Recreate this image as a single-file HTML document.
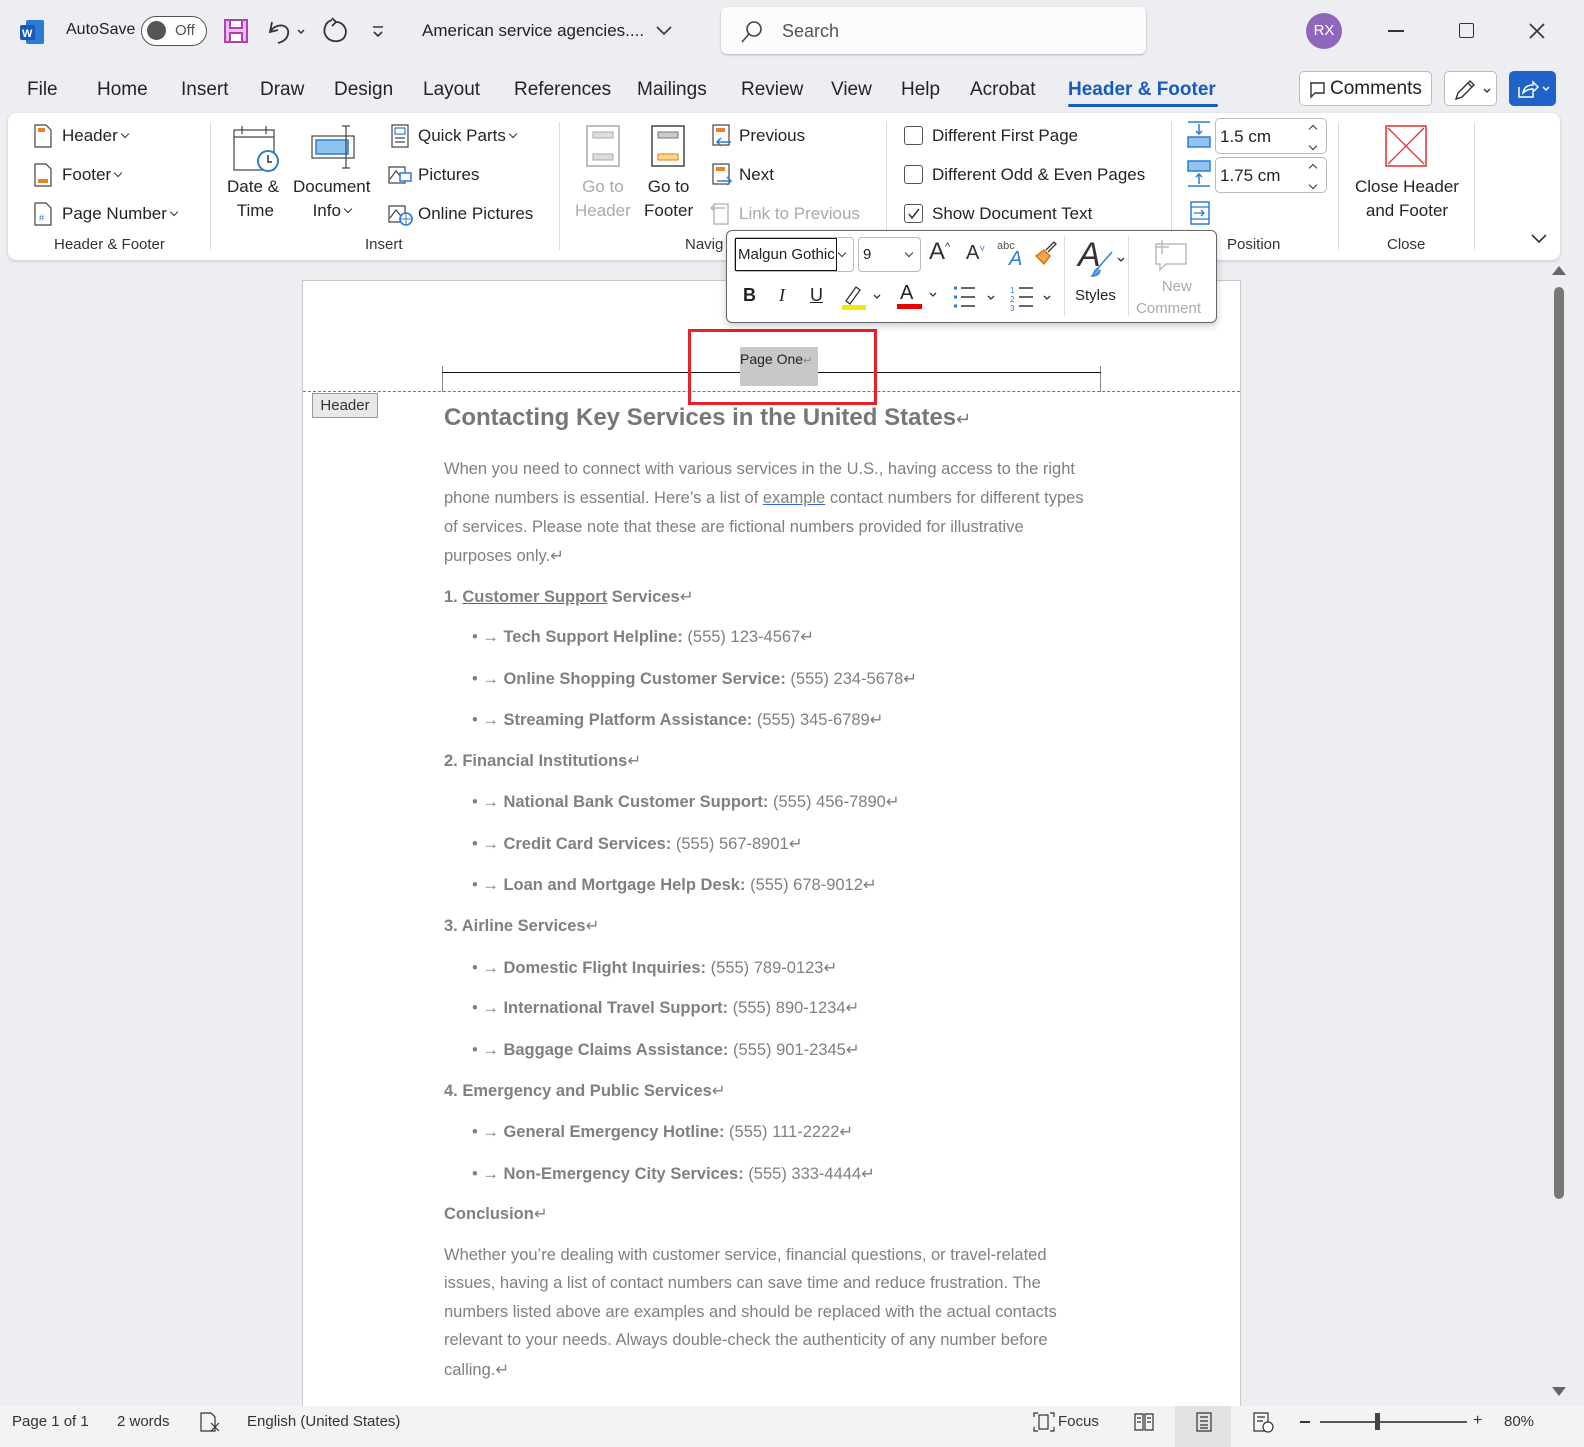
<!DOCTYPE html>
<html><head><meta charset="utf-8"><style>
*{margin:0;padding:0;box-sizing:border-box}
body{width:1584px;height:1447px;position:relative;overflow:hidden;background:#eceef2;font-family:"Liberation Sans",sans-serif;color:#222}
.a{position:absolute;white-space:nowrap}
.t{font-size:19px;color:#242424}
.r{font-size:17px;color:#242424}
.g{color:#aaa}
.d{position:absolute;white-space:nowrap;font-size:16.5px;color:#808080;left:444px}
.b{font-weight:bold}
.bl{left:472px}
.u{text-decoration:underline;text-decoration-color:#3366dd}
.lbl{font-size:15px;color:#333}
.sep{position:absolute;width:1px;background:#ddd}
.cv{display:inline-block;width:6px;height:6px;border-right:1.4px solid #333;border-bottom:1.4px solid #333;transform:rotate(45deg);vertical-align:middle;margin:-6px 0 0 4px}
.cu{display:inline-block;width:6px;height:6px;border-left:1.4px solid #333;border-top:1.4px solid #333;transform:rotate(45deg)}
</style></head><body>
<svg class="a" style="left:18px;top:18px" width="28" height="28"><rect x="8" y="2" width="18" height="24" rx="2" fill="#2b7cd3"/><rect x="2" y="7" width="15" height="15" rx="2" fill="#185abd"/><text x="4" y="19" font-size="11" font-weight="bold" fill="#fff" font-family="Liberation Sans">W</text></svg>
<div class="a" style="left:66px;top:21px;font-size:16px;color:#222">AutoSave</div>
<div class="a" style="left:141px;top:16px;width:66px;height:30px;border:1.5px solid #555;border-radius:15px;background:#fff"><div style="position:absolute;left:5px;top:4px;width:19px;height:19px;border-radius:50%;background:#555"></div><span style="position:absolute;left:33px;top:5px;font-size:15px;color:#555">Off</span></div>
<svg class="a" style="left:223px;top:18px" width="26" height="26"><rect x="2" y="2" width="22" height="22" fill="#e8c0e8" stroke="#b040b0" stroke-width="2"/><rect x="7" y="2" width="12" height="8" fill="#fff" stroke="#b040b0" stroke-width="2"/><rect x="7" y="15" width="12" height="9" fill="#fff" stroke="#b040b0" stroke-width="2"/></svg>
<svg class="a" style="left:266px;top:18px" width="50" height="28"><path d="M6 4 L4 14 L12 12 M4 14 C10 4 24 6 22 16 C21 22 16 24 12 25" fill="none" stroke="#333" stroke-width="1.8"/><path d="M32 12 l3 3 3-3" fill="none" stroke="#333" stroke-width="1.5"/></svg>
<svg class="a" style="left:320px;top:16px" width="30" height="30"><path d="M12 4 C4 6 3 16 6 20 C10 27 22 27 25 20 C28 13 23 6 16 6 M12 2 l4 4 -4 4" fill="none" stroke="#333" stroke-width="1.8"/></svg>
<svg class="a" style="left:370px;top:24px" width="16" height="16"><path d="M3 3h10 M4 8l4 4 4-4" fill="none" stroke="#333" stroke-width="1.6"/></svg>
<div class="a" style="left:422px;top:21px;font-size:17px;color:#222">American service agencies....</div>
<svg class="a" style="left:655px;top:24px" width="18" height="14"><path d="M2 3l7 7 7-7" fill="none" stroke="#333" stroke-width="1.6"/></svg>
<div class="a" style="left:721px;top:7px;width:425px;height:47px;background:#fcfcfc;border-radius:6px;box-shadow:0 1px 2px rgba(0,0,0,.25)"></div>
<svg class="a" style="left:740px;top:20px" width="24" height="24"><circle cx="14" cy="9" r="7" fill="none" stroke="#444" stroke-width="1.6"/><path d="M9 14L2 22" stroke="#444" stroke-width="1.6"/></svg>
<div class="a" style="left:782px;top:21px;font-size:18px;color:#555">Search</div>
<div class="a" style="left:1306px;top:13px;width:36px;height:36px;border-radius:50%;background:#8e66bb;color:#fff;font-size:15px;text-align:center;line-height:36px">RX</div>
<div class="a" style="left:1388px;top:30px;width:16px;height:1.5px;background:#333"></div>
<div class="a" style="left:1459px;top:23px;width:15px;height:15px;border:1.5px solid #333;border-radius:2px"></div>
<svg class="a" style="left:1528px;top:22px" width="18" height="18"><path d="M2 2l14 14M16 2L2 16" stroke="#333" stroke-width="1.6"/></svg>
<div class="a t" style="left:27px;top:79px">File</div>
<div class="a t" style="left:97px;top:79px">Home</div>
<div class="a t" style="left:181px;top:79px">Insert</div>
<div class="a t" style="left:260px;top:79px">Draw</div>
<div class="a t" style="left:334px;top:79px">Design</div>
<div class="a t" style="left:423px;top:79px">Layout</div>
<div class="a t" style="left:514px;top:79px">References</div>
<div class="a t" style="left:637px;top:79px">Mailings</div>
<div class="a t" style="left:741px;top:79px">Review</div>
<div class="a t" style="left:831px;top:79px">View</div>
<div class="a t" style="left:901px;top:79px">Help</div>
<div class="a t" style="left:970px;top:79px">Acrobat</div>
<div class="a t" style="left:1068px;top:79px;color:#185abd;font-weight:bold">Header &amp; Footer</div>
<div class="a" style="left:1068px;top:104px;width:150px;height:3px;background:#185abd;border-radius:2px"></div>
<div class="a" style="left:1299px;top:71px;width:133px;height:35px;border:1px solid #bbb;border-radius:5px;background:#fff"><svg style="position:absolute;left:8px;top:9px" width="18" height="18"><path d="M2 2h14v10H7l-4 4V2z" fill="none" stroke="#333" stroke-width="1.4"/></svg><span style="position:absolute;left:30px;top:6px;font-size:19px;color:#222">Comments</span></div>
<div class="a" style="left:1444px;top:71px;width:53px;height:35px;border:1px solid #bbb;border-radius:5px;background:#fff"><svg style="position:absolute;left:7px;top:6px" width="42" height="24"><path d="M4 21l2-6 12-12 4 4-12 12z M16 5l4 4" fill="none" stroke="#333" stroke-width="1.4"/><path d="M32 11l3 3 3-3" fill="none" stroke="#333" stroke-width="1.4"/></svg></div>
<div class="a" style="left:1509px;top:71px;width:47px;height:35px;border-radius:5px;background:#1f63c8"><svg style="position:absolute;left:8px;top:8px" width="34" height="20"><path d="M2 8v10h14v-4 M6 14c1-6 5-8 10-8V3l5 5-5 5V10c-4 0-7 1-10 4z" fill="none" stroke="#fff" stroke-width="1.5"/><path d="M26 8l3 3 3-3" fill="none" stroke="#fff" stroke-width="1.5"/></svg></div>
<div class="a" style="left:8px;top:113px;width:1552px;height:147px;background:#fff;border-radius:8px;box-shadow:0 1px 3px rgba(0,0,0,.18)"></div>
<svg class="a" style="left:33px;top:124px" width="20" height="24"><path d="M2 1h11l5 5v17H2z" fill="#fff" stroke="#444" stroke-width="1.2"/><rect x="5" y="4" width="7" height="4" fill="#e8832a"/></svg>
<div class="a r" style="left:62px;top:126px">Header<span class="cv"></span></div>
<svg class="a" style="left:33px;top:163px" width="20" height="24"><path d="M2 1h11l5 5v17H2z" fill="#fff" stroke="#444" stroke-width="1.2"/><rect x="5" y="16" width="10" height="4" fill="#e8832a"/></svg>
<div class="a r" style="left:62px;top:165px">Footer<span class="cv"></span></div>
<svg class="a" style="left:33px;top:202px" width="20" height="24"><path d="M2 1h11l5 5v17H2z" fill="#fff" stroke="#444" stroke-width="1.2"/><text x="6" y="19" font-size="9" fill="#2b7cd3" font-family="Liberation Sans">#</text></svg>
<div class="a r" style="left:62px;top:204px">Page Number<span class="cv"></span></div>
<div class="a lbl" style="left:54px;top:236px">Header &amp; Footer</div>
<div class="sep" style="left:210px;top:122px;height:128px"></div>
<svg class="a" style="left:232px;top:124px" width="50" height="50"><rect x="2" y="6" width="40" height="40" fill="#fff" stroke="#444" stroke-width="1.2"/><path d="M2 13h40 M10 2v8 M34 2v8" stroke="#444" stroke-width="1.2"/><circle cx="36" cy="37" r="10" fill="#fff" stroke="#2b7cd3" stroke-width="2"/><path d="M36 31v7h4" fill="none" stroke="#333" stroke-width="1.5"/></svg>
<div class="a r" style="left:227px;top:175px;text-align:center;line-height:24px">Date &amp;<br>&nbsp;Time</div>
<svg class="a" style="left:310px;top:124px" width="50" height="46"><rect x="2" y="12" width="42" height="22" fill="#fff" stroke="#444" stroke-width="1.2"/><rect x="6" y="16" width="32" height="14" fill="#8fc3f0" stroke="#2b7cd3" stroke-width="1.5"/><path d="M36 2v42 M32 2h8 M32 44h8" stroke="#444" stroke-width="1.2"/></svg>
<div class="a r" style="left:293px;top:175px;text-align:center;line-height:24px">Document<br>Info<span class="cv"></span></div>
<svg class="a" style="left:390px;top:124px" width="20" height="24"><rect x="2" y="1" width="16" height="22" fill="#fff" stroke="#444" stroke-width="1.2"/><rect x="5" y="4" width="10" height="6" fill="#fff" stroke="#2b7cd3" stroke-width="1.2"/><path d="M5 14h10M5 18h10" stroke="#666" stroke-width="1.5"/></svg>
<div class="a r" style="left:418px;top:126px">Quick Parts<span class="cv"></span></div>
<svg class="a" style="left:387px;top:163px" width="26" height="24"><path d="M2 4h16v16H2z M3 16l6-8 5 6" fill="none" stroke="#444" stroke-width="1.2"/><rect x="13" y="10" width="11" height="8" fill="#fff" stroke="#2b7cd3" stroke-width="1.5"/></svg>
<div class="a r" style="left:418px;top:165px">Pictures</div>
<svg class="a" style="left:387px;top:202px" width="26" height="24"><path d="M2 4h16v16H2z M3 16l6-8 5 6" fill="none" stroke="#444" stroke-width="1.2"/><circle cx="19" cy="17" r="6" fill="#fff" stroke="#2b7cd3" stroke-width="1.6"/><path d="M13 17h12M19 11v12" stroke="#2b7cd3" stroke-width="1"/></svg>
<div class="a r" style="left:418px;top:204px">Online Pictures</div>
<div class="a lbl" style="left:365px;top:236px">Insert</div>
<div class="sep" style="left:559px;top:122px;height:128px"></div>
<svg class="a" style="left:585px;top:124px" width="36" height="44"><rect x="2" y="2" width="32" height="40" fill="#fff" stroke="#aaa" stroke-width="1.5"/><rect x="8" y="8" width="20" height="6" fill="#ddd" stroke="#aaa"/><rect x="8" y="30" width="20" height="6" fill="#ddd" stroke="#aaa"/></svg>
<div class="a r g" style="left:575px;top:175px;text-align:center;line-height:24px">Go to<br>Header</div>
<svg class="a" style="left:650px;top:124px" width="36" height="44"><rect x="2" y="2" width="32" height="40" fill="#fff" stroke="#444" stroke-width="1.5"/><rect x="8" y="8" width="20" height="6" fill="#ccc" stroke="#777"/><rect x="8" y="30" width="20" height="6" fill="#fcd68a" stroke="#e07a10"/></svg>
<div class="a r" style="left:644px;top:175px;text-align:center;line-height:24px">Go to<br>Footer</div>
<svg class="a" style="left:711px;top:124px" width="22" height="24"><rect x="2" y="1" width="16" height="20" fill="#fff" stroke="#444" stroke-width="1.2"/><rect x="5" y="4" width="9" height="4" fill="#e8832a"/><path d="M20 18H7 M10 14l-4 4 4 4" fill="none" stroke="#2b7cd3" stroke-width="1.5"/></svg>
<div class="a r" style="left:739px;top:126px">Previous</div>
<svg class="a" style="left:711px;top:163px" width="22" height="24"><rect x="2" y="1" width="16" height="20" fill="#fff" stroke="#444" stroke-width="1.2"/><rect x="5" y="4" width="9" height="4" fill="#e8832a"/><path d="M6 18h13 M16 14l4 4-4 4" fill="none" stroke="#2b7cd3" stroke-width="1.5"/></svg>
<div class="a r" style="left:739px;top:165px">Next</div>
<svg class="a" style="left:709px;top:200px" width="24" height="26"><rect x="5" y="4" width="14" height="20" fill="#fff" stroke="#bbb" stroke-width="1.5"/><path d="M2 8h14 M5 5l-3 3 3 3" fill="none" stroke="#bbb" stroke-width="1.5"/></svg>
<div class="a r g" style="left:739px;top:204px">Link to Previous</div>
<div class="a lbl" style="left:685px;top:236px">Navig</div>
<div class="sep" style="left:886px;top:122px;height:128px"></div>
<div class="a" style="left:904px;top:126px;width:19px;height:19px;border:1.5px solid #555;border-radius:3px"></div>
<div class="a r" style="left:932px;top:126px">Different First Page</div>
<div class="a" style="left:904px;top:165px;width:19px;height:19px;border:1.5px solid #555;border-radius:3px"></div>
<div class="a r" style="left:932px;top:165px">Different Odd &amp; Even Pages</div>
<div class="a" style="left:904px;top:204px;width:19px;height:19px;border:1.5px solid #555;border-radius:3px"><svg style="position:absolute;left:2px;top:2px" width="14" height="14"><path d="M2 7l3 4 7-9" fill="none" stroke="#333" stroke-width="1.5"/></svg></div>
<div class="a r" style="left:932px;top:204px">Show Document Text</div>
<div class="sep" style="left:1171px;top:122px;height:128px"></div>
<svg class="a" style="left:1186px;top:120px" width="28" height="30"><path d="M2 2h22 M13 4v10 M10 11l3 3 3-3" fill="none" stroke="#2b7cd3" stroke-width="1.5"/><rect x="2" y="17" width="22" height="10" fill="#8fc3f0" stroke="#2b7cd3" stroke-width="1.5"/></svg>
<div class="a" style="left:1215px;top:118px;width:112px;height:36px;border:1px solid #bbb;border-radius:5px"><span style="position:absolute;left:4px;top:8px;font-size:17px">1.5 cm</span><span class="cu" style="position:absolute;right:10px;top:7px"></span><span class="cv" style="position:absolute;right:10px;top:24px;margin:0"></span></div>
<svg class="a" style="left:1186px;top:158px" width="28" height="30"><rect x="2" y="3" width="22" height="10" fill="#8fc3f0" stroke="#2b7cd3" stroke-width="1.5"/><path d="M2 28h22 M13 26V16 M10 19l3-3 3 3" fill="none" stroke="#2b7cd3" stroke-width="1.5"/></svg>
<div class="a" style="left:1215px;top:157px;width:112px;height:36px;border:1px solid #bbb;border-radius:5px"><span style="position:absolute;left:4px;top:8px;font-size:17px">1.75 cm</span><span class="cu" style="position:absolute;right:10px;top:7px"></span><span class="cv" style="position:absolute;right:10px;top:24px;margin:0"></span></div>
<svg class="a" style="left:1189px;top:200px" width="24" height="26"><rect x="2" y="2" width="18" height="22" fill="none" stroke="#2b7cd3" stroke-width="1.5"/><path d="M2 7h18M2 19h18 M5 13h10 M12 10l3 3-3 3" fill="none" stroke="#2b7cd3" stroke-width="1.3"/></svg>
<div class="a lbl" style="left:1227px;top:236px">Position</div>
<div class="sep" style="left:1338px;top:122px;height:128px"></div>
<svg class="a" style="left:1384px;top:124px" width="46" height="46"><rect x="2" y="2" width="40" height="40" fill="#fff" stroke="#e03030" stroke-width="1.5"/><path d="M4 4l36 36M40 4L4 40" stroke="#e03030" stroke-width="1.3"/></svg>
<div class="a r" style="left:1355px;top:175px;text-align:center;line-height:24px">Close Header<br>and Footer</div>
<div class="a lbl" style="left:1387px;top:236px">Close</div>
<div class="sep" style="left:1474px;top:122px;height:128px"></div>
<svg class="a" style="left:1530px;top:232px" width="18" height="14"><path d="M2 3l7 7 7-7" fill="none" stroke="#333" stroke-width="1.6"/></svg>
<div class="a" style="left:302px;top:280px;width:939px;height:1130px;background:#fff;border:1px solid #c8c8c8"></div>
<div class="a" style="left:442px;top:366px;width:1px;height:26px;background:#888"></div>
<div class="a" style="left:1100px;top:366px;width:1px;height:26px;background:#888"></div>
<div class="a" style="left:442px;top:372px;width:659px;height:1px;background:#111"></div>
<div class="a" style="left:303px;top:391px;width:937px;border-top:1px dashed #777"></div>
<div class="a" style="left:740px;top:347px;width:78px;height:39px;background:#c8c8c8"></div>
<div class="a" style="left:740px;top:351px;font-size:14px;color:#222">Page One<span style="color:#888;font-size:11px">↵</span></div>
<div class="a" style="left:688px;top:329px;width:189px;height:76px;border:3px solid #e8202a"></div>
<div class="a" style="left:312px;top:393px;width:66px;height:25px;background:#e8e8e8;border:1px solid #999;font-size:15px;color:#333;text-align:center;line-height:23px">Header</div>
<div class="d b" style="top:404px;font-size:24px;color:#777">Contacting Key Services in the United States<span style="font-weight:normal;font-size:18px">↵</span></div>
<div class="d" style="top:460px">When you need to connect with various services in the U.S., having access to the right</div>
<div class="d" style="top:489px">phone numbers is essential. Here’s a list of <span class="u">example</span> contact numbers for different types</div>
<div class="d" style="top:518px">of services. Please note that these are fictional numbers provided for illustrative</div>
<div class="d" style="top:546px">purposes only.↵</div>
<div class="d b" style="top:587px">1. <span class="u">Customer Support</span> Services<span style="font-weight:normal">↵</span></div>
<div class="d bl" style="top:627px">• → <b>Tech Support Helpline:</b> (555) 123-4567↵</div>
<div class="d bl" style="top:669px">• → <b>Online Shopping Customer Service:</b> (555) 234-5678↵</div>
<div class="d bl" style="top:710px">• → <b>Streaming Platform Assistance:</b> (555) 345-6789↵</div>
<div class="d b" style="top:751px">2. Financial Institutions<span style="font-weight:normal">↵</span></div>
<div class="d bl" style="top:792px">• → <b>National Bank Customer Support:</b> (555) 456-7890↵</div>
<div class="d bl" style="top:834px">• → <b>Credit Card Services:</b> (555) 567-8901↵</div>
<div class="d bl" style="top:875px">• → <b>Loan and Mortgage Help Desk:</b> (555) 678-9012↵</div>
<div class="d b" style="top:916px">3. Airline Services<span style="font-weight:normal">↵</span></div>
<div class="d bl" style="top:958px">• → <b>Domestic Flight Inquiries:</b> (555) 789-0123↵</div>
<div class="d bl" style="top:998px">• → <b>International Travel Support:</b> (555) 890-1234↵</div>
<div class="d bl" style="top:1040px">• → <b>Baggage Claims Assistance:</b> (555) 901-2345↵</div>
<div class="d b" style="top:1081px">4. Emergency and Public Services<span style="font-weight:normal">↵</span></div>
<div class="d bl" style="top:1122px">• → <b>General Emergency Hotline:</b> (555) 111-2222↵</div>
<div class="d bl" style="top:1164px">• → <b>Non-Emergency City Services:</b> (555) 333-4444↵</div>
<div class="d b" style="top:1204px">Conclusion<span style="font-weight:normal">↵</span></div>
<div class="d" style="top:1246px">Whether you’re dealing with customer service, financial questions, or travel-related</div>
<div class="d" style="top:1274px">issues, having a list of contact numbers can save time and reduce frustration. The</div>
<div class="d" style="top:1303px">numbers listed above are examples and should be replaced with the actual contacts</div>
<div class="d" style="top:1331px">relevant to your needs. Always double-check the authenticity of any number before</div>
<div class="d" style="top:1360px">calling.↵</div>
<div class="a" style="left:726px;top:230px;width:491px;height:93px;background:#fff;border:1.5px solid #666;border-radius:6px;box-shadow:0 3px 8px rgba(0,0,0,.2)"></div>
<div class="a" style="left:734px;top:237px;width:120px;height:35px;border:1px solid #bbb;border-radius:4px"></div>
<div class="a" style="left:735px;top:238px;width:102px;height:33px;border:1.5px solid #111;font-size:15px;line-height:31px;padding-left:2px;overflow:hidden">Malgun Gothic</div>
<span class="a cv" style="left:839px;top:250px;margin:0"></span>
<div class="a" style="left:858px;top:237px;width:63px;height:35px;border:1px solid #bbb;border-radius:4px;font-size:15px;line-height:33px;padding-left:4px">9<span class="cv" style="position:absolute;right:8px;top:12px;margin:0"></span></div>
<div class="a" style="left:929px;top:238px;font-size:24px;color:#333">A<sup style="font-size:11px">^</sup></div>
<div class="a" style="left:966px;top:242px;font-size:20px;color:#333">A<sup style="font-size:10px;color:#2b7cd3">˅</sup></div>
<div class="a" style="left:997px;top:240px;font-size:11px;color:#555">abc</div>
<div class="a" style="left:1009px;top:248px;font-size:20px;color:#2b7cd3;font-style:italic">A</div>
<svg class="a" style="left:1032px;top:240px" width="26" height="28"><path d="M4 16l8-6 6 6-6 8z" fill="#f6a44a" stroke="#d06a10" stroke-width="1.3"/><path d="M14 10l8-8 2 2-8 8" fill="none" stroke="#333" stroke-width="1.3"/></svg>
<div class="a" style="left:1064px;top:236px;width:1px;height:80px;background:#ddd"></div>
<div class="a" style="left:1078px;top:236px;font-size:34px;color:#333;font-style:italic">A</div>
<svg class="a" style="left:1090px;top:248px" width="38" height="30"><path d="M22 4L8 20 M8 20c-4 2-4 6-6 8 4 0 8-2 8-6" fill="#6aa8e8" stroke="#2b7cd3" stroke-width="1.4"/><path d="M28 10l3 3 3-3" fill="none" stroke="#333" stroke-width="1.3"/></svg>
<div class="a" style="left:1075px;top:287px;font-size:15px">Styles</div>
<div class="a" style="left:1128px;top:236px;width:1px;height:80px;background:#ddd"></div>
<svg class="a" style="left:1150px;top:238px" width="40" height="36"><path d="M6 6h30v20H16l-6 6v-6H6z" fill="#fff" stroke="#bbb" stroke-width="1.5"/><path d="M12 2v14M5 9h14" stroke="#bbb" stroke-width="1.5"/></svg>
<div class="a g" style="left:1136px;top:276px;font-size:15px;text-align:center;line-height:22px">&nbsp;&nbsp;&nbsp;&nbsp;New<br>Comment</div>
<div class="a b" style="left:743px;top:285px;font-size:18px">B</div>
<div class="a" style="left:779px;top:285px;font-size:18px;font-style:italic;font-family:'Liberation Serif',serif">I</div>
<div class="a" style="left:810px;top:285px;font-size:18px;text-decoration:underline">U</div>
<svg class="a" style="left:840px;top:283px" width="48" height="28"><path d="M6 18l10-14 4 3-10 14z" fill="none" stroke="#333" stroke-width="1.3"/><rect x="2" y="22" width="24" height="5" fill="#f5e90a"/><path d="M34 12l3 3 3-3" fill="none" stroke="#333" stroke-width="1.3"/></svg>
<div class="a" style="left:900px;top:282px;font-size:20px">A</div>
<div class="a" style="left:897px;top:304px;width:25px;height:5px;background:#e00"></div>
<svg class="a" style="left:928px;top:290px" width="12" height="10"><path d="M2 3l3 3 3-3" fill="none" stroke="#333" stroke-width="1.3"/></svg>
<svg class="a" style="left:952px;top:284px" width="46" height="28"><path d="M2 4h3M2 13h3M2 22h3" stroke="#2b7cd3" stroke-width="3"/><path d="M9 4h14M9 13h14M9 22h14" stroke="#333" stroke-width="1.5"/><path d="M36 12l3 3 3-3" fill="none" stroke="#333" stroke-width="1.3"/></svg>
<svg class="a" style="left:1010px;top:284px" width="46" height="28"><text x="0" y="9" font-size="8" fill="#2b7cd3" font-family="Liberation Sans">1</text><text x="0" y="18" font-size="8" fill="#2b7cd3" font-family="Liberation Sans">2</text><text x="0" y="27" font-size="8" fill="#2b7cd3" font-family="Liberation Sans">3</text><path d="M9 4h14M9 13h14M9 22h14" stroke="#333" stroke-width="1.5"/><path d="M34 12l3 3 3-3" fill="none" stroke="#333" stroke-width="1.3"/></svg>
<div class="a" style="left:1554px;top:287px;width:10px;height:912px;background:#777;border-radius:5px"></div>
<div class="a" style="left:1552px;top:266px;width:0;height:0;border-left:7px solid transparent;border-right:7px solid transparent;border-bottom:9px solid #666"></div>
<div class="a" style="left:1552px;top:1387px;width:0;height:0;border-left:7px solid transparent;border-right:7px solid transparent;border-top:9px solid #666"></div>
<div class="a" style="left:0;top:1406px;width:1584px;height:41px;background:#f3f3f3"></div>
<div class="a" style="left:12px;top:1413px;font-size:15px;color:#333">Page 1 of 1</div>
<div class="a" style="left:117px;top:1413px;font-size:15px;color:#333">2 words</div>
<svg class="a" style="left:199px;top:1411px" width="24" height="22"><path d="M2 2h10l4 4v14H2z" fill="none" stroke="#333" stroke-width="1.2"/><path d="M12 12l8 8M20 12l-8 8" stroke="#333" stroke-width="1.2"/></svg>
<div class="a" style="left:247px;top:1413px;font-size:15px;color:#333">English (United States)</div>
<svg class="a" style="left:1032px;top:1411px" width="24" height="22"><path d="M2 6V2h4M2 16v4h4M18 2h4v4M18 20h4v-4" fill="none" stroke="#333" stroke-width="1.2"/><rect x="7" y="4" width="9" height="14" fill="none" stroke="#333" stroke-width="1.2"/></svg>
<div class="a" style="left:1058px;top:1413px;font-size:15px;color:#333">Focus</div>
<svg class="a" style="left:1133px;top:1411px" width="22" height="22"><path d="M2 3h8v16H2zM12 3h8v16h-8z M4 7h4M4 11h4M14 7h4M14 11h4" fill="none" stroke="#333" stroke-width="1.2"/></svg>
<div class="a" style="left:1175px;top:1406px;width:56px;height:41px;background:#e2e2e2"></div>
<svg class="a" style="left:1193px;top:1411px" width="22" height="22"><path d="M4 2h14v18H4z M7 6h8M7 10h8M7 14h8M7 17h8" fill="none" stroke="#333" stroke-width="1.2"/></svg>
<svg class="a" style="left:1252px;top:1411px" width="24" height="22"><path d="M2 2h14v18H2z M5 6h8M5 10h6" fill="none" stroke="#333" stroke-width="1.2"/><circle cx="16" cy="16" r="5" fill="#fff" stroke="#333" stroke-width="1.2"/></svg>
<div class="a" style="left:1300px;top:1421px;width:10px;height:1.5px;background:#333"></div>
<div class="a" style="left:1320px;top:1421px;width:147px;height:2px;background:#555"></div>
<div class="a" style="left:1375px;top:1413px;width:5px;height:17px;background:#444"></div>
<div class="a" style="left:1473px;top:1412px;font-size:16px;color:#333">+</div>
<div class="a" style="left:1504px;top:1413px;font-size:15px;color:#333">80%</div>
</body></html>
